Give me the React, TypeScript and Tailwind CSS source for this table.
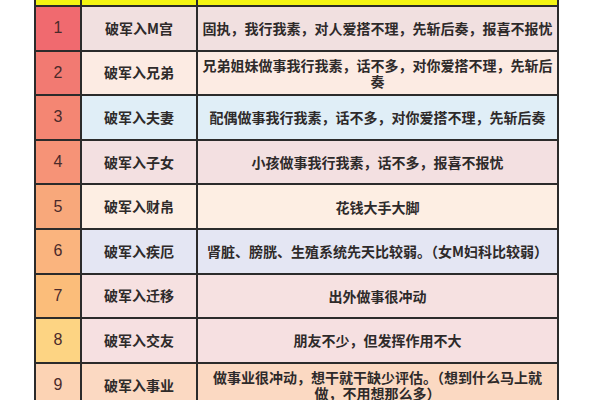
import React from 'react'

interface Row {
  n: number
  palace: string
  text: string
  num: string
  bg: string
}

const rows: Row[] = [
  { n: 1, palace: '破军入M宫', text: '固执，我行我素，对人爱搭不理，先斩后奏，报喜不报忧', num: 'bg-[#f06a6f]', bg: 'bg-[#f1e0e0]' },
  { n: 2, palace: '破军入兄弟', text: '兄弟姐妹做事我行我素，话不多，对你爱搭不理，先斩后奏', num: 'bg-[#f27a72]', bg: 'bg-[#fcebe3]' },
  { n: 3, palace: '破军入夫妻', text: '配偶做事我行我素，话不多，对你爱搭不理，先斩后奏', num: 'bg-[#f48673]', bg: 'bg-[#e0eef7]' },
  { n: 4, palace: '破军入子女', text: '小孩做事我行我素，话不多，报喜不报忧', num: 'bg-[#f69377]', bg: 'bg-[#f3e0e1]' },
  { n: 5, palace: '破军入财帛', text: '花钱大手大脚', num: 'bg-[#f8a87b]', bg: 'bg-[#fdeee3]' },
  { n: 6, palace: '破军入疾厄', text: '肾脏、膀胱、生殖系统先天比较弱。（女M妇科比较弱）', num: 'bg-[#fab47e]', bg: 'bg-[#e4e6f3]' },
  { n: 7, palace: '破军入迁移', text: '出外做事很冲动', num: 'bg-[#fbbd7a]', bg: 'bg-[#f6e1e1]' },
  { n: 8, palace: '破军入交友', text: '朋友不少，但发挥作用不大', num: 'bg-[#fdd483]', bg: 'bg-[#f6e0e1]' },
  { n: 9, palace: '破军入事业', text: '做事业很冲动，想干就干缺少评估。（想到什么马上就做，不用想那么多）', num: 'bg-[#fcd3b4]', bg: 'bg-[#fbd9c2]' },
]

export default function App() {
  return (
    <div className="w-[600px] h-[400px] overflow-hidden bg-white pl-[34px] font-['Noto_Sans_CJK_SC',sans-serif] text-[#2e2a2a]">
      <table className="border-collapse table-fixed w-[523px]">
        <colgroup>
          <col className="w-[46px]" />
          <col className="w-[116px]" />
          <col className="w-[361px]" />
        </colgroup>
        <tbody>
          <tr className="h-[6px]">
            <td className="bg-[#f4f412] border-2 border-t-0 border-[#2b2b2b] p-0" />
            <td className="bg-[#f4f412] border-2 border-t-0 border-[#2b2b2b] p-0" />
            <td className="bg-[#f4f412] border-2 border-t-0 border-[#2b2b2b] p-0" />
          </tr>
          {rows.map((r) => (
            <tr key={r.n} className="h-[44.6px]">
              <td className={`${r.num} border-2 border-[#2b2b2b] text-center align-middle text-[16px] text-[#4a2a2a] font-['Liberation_Sans',sans-serif] p-0`}>
                {r.n}
              </td>
              <td className={`${r.bg} border-2 border-[#2b2b2b] text-center align-middle text-[14px] font-bold p-0`}>
                {r.palace}
              </td>
              <td className={`${r.bg} border-2 border-[#2b2b2b] text-center align-middle text-[14px] font-bold leading-[16px] px-[2px] py-0`}>
                {r.text}
              </td>
            </tr>
          ))}
        </tbody>
      </table>
    </div>
  )
}
